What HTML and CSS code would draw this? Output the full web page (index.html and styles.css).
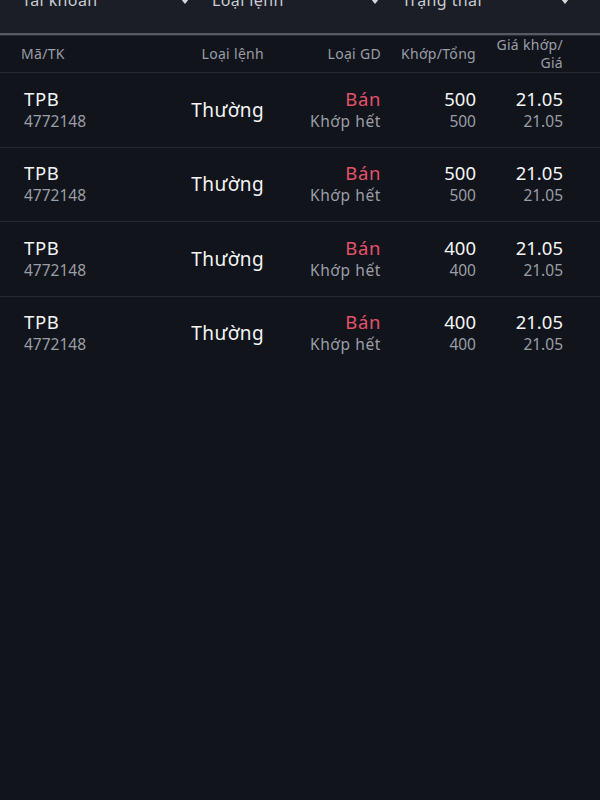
FILE: index.html
```html
<!DOCTYPE html>
<html lang="vi">
<head>
  <meta charset="UTF-8" />
  <title>Sổ lệnh</title>
  <meta name="viewport" content="width=device-width, initial-scale=1.0" />
  <link rel="stylesheet" href="styles.css">
</head>
<body>
  <div class="filters">
    <div class="filter"><span>Tài khoản</span><i class="caret"></i></div>
    <div class="filter"><span>Loại lệnh</span><i class="caret"></i></div>
    <div class="filter"><span>Trạng thái</span><i class="caret"></i></div>
  </div>

  <div class="table">
    <div class="row head">
      <div class="cell left">Mã/TK</div>
      <div class="cell">Loại lệnh</div>
      <div class="cell">Loại GD</div>
      <div class="cell">Khớp/Tổng</div>
      <div class="cell">Giá khớp/<br>Giá</div>
    </div>

    <div class="row order">
      <div class="cell left"><b class="word">TPB</b><small>4772148</small></div>
      <div class="cell type word">Thường</div>
      <div class="cell"><b class="sell word">Bán</b><small class="word">Khớp hết</small></div>
      <div class="cell"><b>500</b><small>500</small></div>
      <div class="cell"><b>21.05</b><small>21.05</small></div>
    </div>

    <div class="row order">
      <div class="cell left"><b class="word">TPB</b><small>4772148</small></div>
      <div class="cell type word">Thường</div>
      <div class="cell"><b class="sell word">Bán</b><small class="word">Khớp hết</small></div>
      <div class="cell"><b>500</b><small>500</small></div>
      <div class="cell"><b>21.05</b><small>21.05</small></div>
    </div>

    <div class="row order">
      <div class="cell left"><b class="word">TPB</b><small>4772148</small></div>
      <div class="cell type word">Thường</div>
      <div class="cell"><b class="sell word">Bán</b><small class="word">Khớp hết</small></div>
      <div class="cell"><b>400</b><small>400</small></div>
      <div class="cell"><b>21.05</b><small>21.05</small></div>
    </div>

    <div class="row order">
      <div class="cell left"><b class="word">TPB</b><small>4772148</small></div>
      <div class="cell type word">Thường</div>
      <div class="cell"><b class="sell word">Bán</b><small class="word">Khớp hết</small></div>
      <div class="cell"><b>400</b><small>400</small></div>
      <div class="cell"><b>21.05</b><small>21.05</small></div>
    </div>
  </div>
</body>
</html>
```

FILE: styles.css
```css
:root {
  --bg: #12141b;
  --bar: #1b1e26;
  --line: #262a33;
  --text: #f3f4f6;
  --muted: #9a9ea7;
  --sell: #e2526c;
}

html, body {
  margin: 0;
  padding: 0;
  background: var(--bg);
  color: var(--text);
  font-family: 'Noto Sans', 'Lato', sans-serif;
  overflow: hidden;
}

.filters {
  display: flex;
  gap: 6px;
  margin-top: -10px;
  height: 43px;
  padding: 0 24px 0 12px;
  background: var(--bar);
  border-bottom: 2px solid #565a63;
  box-shadow: 0 1px 0 #2a2d35;
}

.filter {
  flex: 1;
  display: flex;
  justify-content: space-between;
  align-items: center;
  height: 20px;
  padding: 0 7px 0 10px;
  font-size: 16px;
  line-height: 20px;
  letter-spacing: 0.4px;
  color: #c9ccd2;
}

.caret {
  width: 0;
  height: 0;
  border-left: 4px solid transparent;
  border-right: 4px solid transparent;
  border-top: 5px solid #d6d8dc;
  margin-top: 2px;
}

.table {
  margin-top: 1px;
}

.row {
  display: grid;
  grid-template-columns: 133px 110px 117px 95px 87px;
  padding: 0 37px 0 21px;
  align-items: center;
}

.cell {
  text-align: right;
}

.cell.left {
  text-align: left;
}

.head {
  height: 36px;
  font-size: 14px;
  line-height: 18px;
  letter-spacing: 0.3px;
  color: var(--muted);
  border-bottom: 1px solid var(--line);
}

.order {
  height: 73.5px;
  border-bottom: 1px solid var(--line);
}

.order:last-child {
  border-bottom: none;
}

.order .left {
  padding-left: 3px;
}

.order b {
  display: block;
  font-weight: normal;
  font-size: 18.5px;
  line-height: 23px;
}

.order small {
  display: block;
  font-size: 15.5px;
  line-height: 23px;
  color: var(--muted);
}

.order .word {
  letter-spacing: 0.6px;
}

.order .type {
  font-size: 19px;
  letter-spacing: 0.4px;
}

.sell {
  color: var(--sell);
}
```
